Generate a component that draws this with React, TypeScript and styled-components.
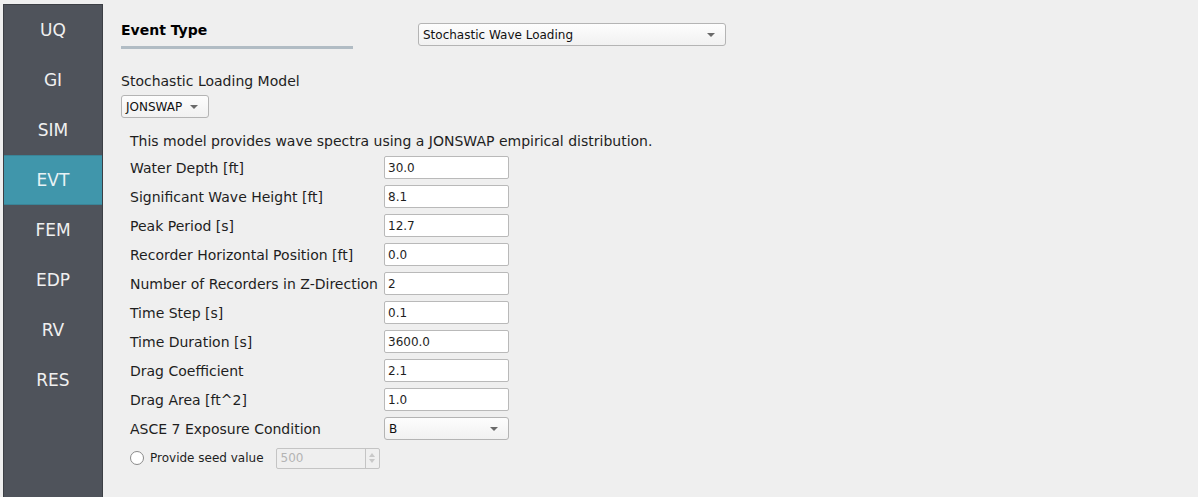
import React from 'react'
import styled, { createGlobalStyle } from 'styled-components'

const GlobalStyle = createGlobalStyle`
  html, body {
    margin: 0;
    padding: 0;
    background: #efefef;
    font-family: "DejaVu Sans", "Liberation Sans", sans-serif;
    color: #1e1e1e;
  }
`

const tabs = ['UQ', 'GI', 'SIM', 'EVT', 'FEM', 'EDP', 'RV', 'RES']

const fields = [
  { label: 'Water Depth [ft]', value: '30.0' },
  { label: 'Significant Wave Height [ft]', value: '8.1' },
  { label: 'Peak Period [s]', value: '12.7' },
  { label: 'Recorder Horizontal Position [ft]', value: '0.0' },
  { label: 'Number of Recorders in Z-Direction', value: '2' },
  { label: 'Time Step [s]', value: '0.1' },
  { label: 'Time Duration [s]', value: '3600.0' },
  { label: 'Drag Coefficient', value: '2.1' },
  { label: 'Drag Area [ft^2]', value: '1.0' },
]

const App = () => {
  return (
    <>
      <GlobalStyle />
      <Window>
        <Sidebar>
          {tabs.map((t) => (
            <Tab key={t} active={t === 'EVT'}>
              {t}
            </Tab>
          ))}
        </Sidebar>
        <Main>
          <HeaderRow>
            <Heading>Event Type</Heading>
            <Combo width={308} offset={1}>
              Stochastic Wave Loading
              <Arrow />
            </Combo>
          </HeaderRow>
          <ModelLabel>Stochastic Loading Model</ModelLabel>
          <Combo width={88}>
            JONSWAP
            <Arrow />
          </Combo>
          <Form>
            <Description>
              This model provides wave spectra using a JONSWAP empirical distribution.
            </Description>
            {fields.map((f) => (
              <Row key={f.label}>
                <Label>{f.label}</Label>
                <Input>{f.value}</Input>
              </Row>
            ))}
            <Row>
              <Label>ASCE 7 Exposure Condition</Label>
              <Combo width={125}>
                B
                <Arrow />
              </Combo>
            </Row>
            <SeedRow>
              <Radio />
              <SeedLabel>Provide seed value</SeedLabel>
              <SpinBox>
                <SpinText>500</SpinText>
                <SpinButtons>
                  <SpinArrow up />
                  <SpinArrow />
                </SpinButtons>
              </SpinBox>
            </SeedRow>
          </Form>
        </Main>
      </Window>
    </>
  )
}

const Window = styled.div`
  display: flex;
  height: 497px;
  padding: 4px 0 0 3px;
  box-sizing: border-box;
  overflow: hidden;
`

const Sidebar = styled.div`
  width: 100px;
  box-sizing: border-box;
  background: #4f535b;
  border: 1px solid #3c3f45;
  border-bottom: none;
  display: flex;
  flex-direction: column;
`

const Tab = styled.div<{ active?: boolean }>`
  height: 50px;
  display: flex;
  align-items: center;
  justify-content: center;
  font-size: 17px;
  color: ${(p) => (p.active ? '#e8f2f5' : '#f0f0f0')};
  background: ${(p) => (p.active ? '#4096ab' : 'transparent')};
  border-top: 1px solid ${(p) => (p.active ? '#3a8497' : 'transparent')};
  border-bottom: 1px solid ${(p) => (p.active ? '#3a8497' : 'transparent')};
  box-sizing: border-box;
`

const Main = styled.div`
  flex: 1;
  padding: 18px 0 0 18px;
  display: flex;
  flex-direction: column;
  align-items: flex-start;
`

const HeaderRow = styled.div`
  display: flex;
  align-items: flex-start;
  gap: 65px;
`

const Heading = styled.div`
  width: 232px;
  font-size: 14px;
  font-weight: bold;
  color: #000;
  padding-bottom: 8px;
  border-bottom: 3px solid #b1bcc4;
`

const Combo = styled.div<{ width: number; offset?: number }>`
  width: ${(p) => p.width}px;
  height: 23px;
  margin-top: ${(p) => p.offset ?? 0}px;
  box-sizing: border-box;
  border: 1px solid #b4b4b4;
  border-radius: 3px;
  background: linear-gradient(#fdfdfd, #f1f1f1);
  font-size: 12px;
  color: #111;
  display: flex;
  align-items: center;
  justify-content: space-between;
  padding: 0 10px 0 4px;
`

const Arrow = styled.span`
  width: 0;
  height: 0;
  border-left: 4px solid transparent;
  border-right: 4px solid transparent;
  border-top: 4px solid #6a6a6a;
`

const ModelLabel = styled.div`
  font-size: 14px;
  margin: 24px 0 6px;
`

const Form = styled.div`
  display: flex;
  flex-direction: column;
  padding-left: 9px;
  margin-top: 15px;
  gap: 6px;
`

const Description = styled.div`
  font-size: 14px;
  margin-bottom: 1px;
`

const Row = styled.div`
  display: flex;
  align-items: center;
  height: 23px;
`

const Label = styled.div`
  width: 254px;
  font-size: 14px;
`

const Input = styled.div`
  width: 125px;
  height: 23px;
  box-sizing: border-box;
  border: 1px solid #b9b9b9;
  border-radius: 2px;
  background: #fff;
  font-size: 12px;
  display: flex;
  align-items: center;
  padding-left: 3px;
`

const SeedRow = styled.div`
  display: flex;
  align-items: center;
  height: 22px;
  margin-top: 1px;
`

const Radio = styled.span`
  width: 12px;
  height: 12px;
  border-radius: 50%;
  border: 1px solid #8a8a8a;
  background: #fff;
`

const SeedLabel = styled.span`
  font-size: 12px;
  margin: 0 12px 0 6px;
`

const SpinBox = styled.div`
  width: 104px;
  height: 21px;
  box-sizing: border-box;
  border: 1px solid #c4c4c4;
  border-radius: 2px;
  background: #efefef;
  display: flex;
`

const SpinText = styled.span`
  flex: 1;
  font-size: 12px;
  color: #b4b4b4;
  display: flex;
  align-items: center;
  padding-left: 4px;
`

const SpinButtons = styled.div`
  width: 13px;
  border-left: 1px solid #c4c4c4;
  display: flex;
  flex-direction: column;
  align-items: center;
  justify-content: center;
  gap: 2px;
`

const SpinArrow = styled.span<{ up?: boolean }>`
  width: 0;
  height: 0;
  border-left: 3px solid transparent;
  border-right: 3px solid transparent;
  ${(p) => (p.up ? 'border-bottom: 4px solid #c8c8c8;' : 'border-top: 4px solid #c8c8c8;')}
`

export default App
